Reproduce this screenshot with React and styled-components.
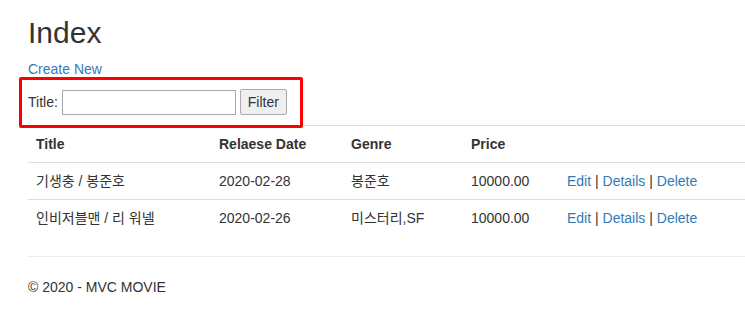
import React from 'react';
import styled, { createGlobalStyle } from 'styled-components';

const GlobalStyle = createGlobalStyle`
  html, body {
    margin: 0;
    padding: 0;
    background: #fff;
  }
  body {
    font-family: "Liberation Sans", Arial, "Noto Sans CJK KR", sans-serif;
    font-size: 14px;
    line-height: 20px;
    color: #333;
  }
  * {
    box-sizing: border-box;
  }
`;

const Page = styled.div`
  padding: 0 0 0 28px;
  overflow: hidden;
`;

const Heading = styled.h2`
  margin: 16px 0 10px;
  font-size: 30px;
  font-weight: 500;
  line-height: 33px;
`;

const LinkText = styled.a`
  color: #337ab7;
  text-decoration: none;
  cursor: pointer;
`;

const Para = styled.p`
  margin: 0 0 10px;
`;

const FilterForm = styled.form`
  position: relative;
  margin: 0 0 10px;
  display: flex;
  align-items: center;
  height: 26px;
`;

const FieldLabel = styled.label`
  margin-right: 4px;
`;

const TextInput = styled.input`
  width: 174px;
  height: 25px;
  border: 1px solid #a9a9a9;
  padding: 1px 2px;
  font: inherit;
  margin-right: 4px;
`;

const FilterButton = styled.button`
  width: 47px;
  height: 26px;
  padding: 0;
  font: inherit;
  color: #333;
  background: #efefef;
  border: 1px solid #aaa;
  border-radius: 2px;
`;

const Highlight = styled.div`
  position: absolute;
  left: -9px;
  top: -12px;
  width: 284px;
  height: 51px;
  border: 3px solid #ff0000;
  border-radius: 2px;
  pointer-events: none;
  z-index: 2;
`;

const Table = styled.table`
  width: 100%;
  border-collapse: collapse;
  margin-bottom: 20px;
`;

const HeadCell = styled.th`
  text-align: left;
  font-weight: bold;
  padding: 8px;
  border-top: 1px solid #ddd;
  border-bottom: 1px solid #ddd;
  width: ${p => p.$w || 'auto'};
`;

const Cell = styled.td`
  padding: 8px;
  border-top: 1px solid #ddd;
  white-space: nowrap;
`;

const Rule = styled.hr`
  margin: 0 0 20px;
  border: 0;
  border-top: 1px solid #eee;
`;

const Footer = styled.footer`
  p {
    margin: 0;
  }
`;

const movies = [
  { title: '기생충 / 봉준호', date: '2020-02-28', genre: '봉준호', price: '10000.00' },
  { title: '인비저블맨 / 리 워넬', date: '2020-02-26', genre: '미스터리,SF', price: '10000.00' },
];

export default function App() {
  return (
    <>
      <GlobalStyle />
      <Page>
        <Heading>Index</Heading>
        <Para>
          <LinkText>Create New</LinkText>
        </Para>
        <FilterForm onSubmit={e => e.preventDefault()}>
          <FieldLabel>Title:</FieldLabel>
          <TextInput type="text" />
          <FilterButton type="submit">Filter</FilterButton>
          <Highlight />
        </FilterForm>
        <Table>
          <thead>
            <tr>
              <HeadCell $w="183px">Title</HeadCell>
              <HeadCell $w="132px">Relaese Date</HeadCell>
              <HeadCell $w="120px">Genre</HeadCell>
              <HeadCell $w="96px">Price</HeadCell>
              <HeadCell></HeadCell>
            </tr>
          </thead>
          <tbody>
            {movies.map(m => (
              <tr key={m.title}>
                <Cell>{m.title}</Cell>
                <Cell>{m.date}</Cell>
                <Cell>{m.genre}</Cell>
                <Cell>{m.price}</Cell>
                <Cell>
                  <LinkText>Edit</LinkText> | <LinkText>Details</LinkText> | <LinkText>Delete</LinkText>
                </Cell>
              </tr>
            ))}
          </tbody>
        </Table>
        <Rule />
        <Footer>
          <p>© 2020 - MVC MOVIE</p>
        </Footer>
      </Page>
    </>
  );
}
